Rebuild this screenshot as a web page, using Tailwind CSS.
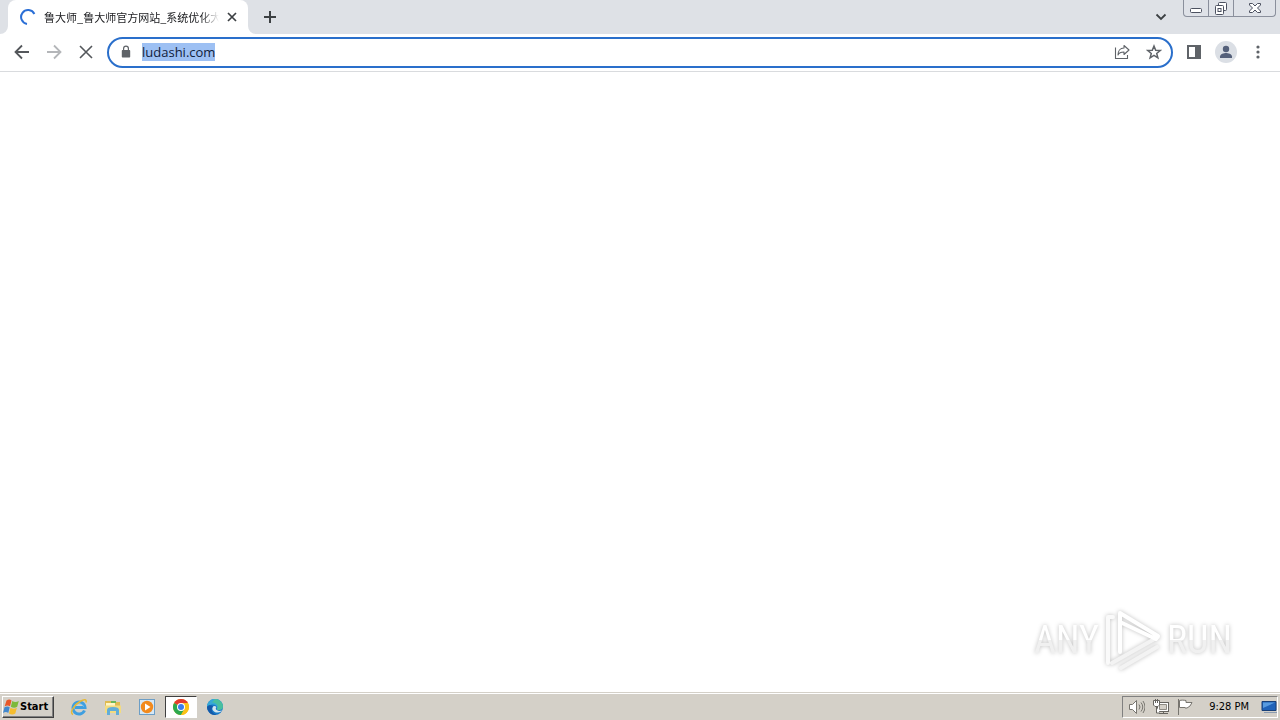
<!DOCTYPE html>
<html lang="zh-CN">
<head>
  <meta charset="UTF-8" />
  <meta name="viewport" content="width=device-width, initial-scale=1.0"/>
  <title>鲁大师_鲁大师官方网站_系统优化大师</title>
  <script src="https://cdn.jsdelivr.net/npm/@tailwindcss/browser@4"></script>
</head>
<body class="h-screen flex flex-col overflow-hidden bg-white font-['DejaVu_Sans_Condensed','Noto_Sans_CJK_SC',sans-serif] text-black">
  <!-- Tab strip -->
  <header class="h-[34px] shrink-0 flex items-start bg-[#dee1e6] pl-2">
    <div class="relative w-60 h-[34px] flex items-center rounded-t-lg bg-white pl-3 pr-2">
      <svg class="absolute -left-2 bottom-0 w-2 h-2" viewBox="0 0 8 8" fill="#fff"><path d="M8 0v8H0a8 8 0 0 0 8-8z"/></svg>
      <svg class="absolute -right-2 bottom-0 w-2 h-2" viewBox="0 0 8 8" fill="#fff"><path d="M0 0v8h8a8 8 0 0 1-8-8z"/></svg>
      <svg class="w-4 h-4 shrink-0" viewBox="0 0 16 16" fill="none" stroke="#2b6fd6" stroke-width="2"><path d="M7 15A7 7 0 1 1 14.400 5"/></svg>
      <span class="ml-2 w-[175px] overflow-hidden whitespace-nowrap font-['Noto_Sans_CJK_SC',sans-serif] text-[11px] leading-4 text-[#202124] mask-r-from-90% mask-r-to-100%">鲁大师_鲁大师官方网站_系统优化大</span>
      <button class="ml-auto w-4 h-4 shrink-0 flex items-center justify-center" aria-label="Close tab">
        <svg class="w-4 h-4" viewBox="0 0 16 16" stroke="#3c4043" stroke-width="1.700"><path d="M4 4l8 8M12 4l-8 8"/></svg>
      </button>
    </div>
    <button class="ml-3 mt-[7px] w-5 h-5" aria-label="New tab">
      <svg viewBox="0 0 20 20" stroke="#3c4043" stroke-width="2"><path d="M10 4v12M4 10h12"/></svg>
    </button>
    <button class="ml-auto mt-2 w-4 h-4" aria-label="Search tabs">
      <svg viewBox="0 0 16 16" fill="none" stroke="#3c4043" stroke-width="1.800"><path d="M3.500 6.500L8 11l4.500-4.500"/></svg>
    </button>
    <div class="ml-[14px] mr-1 h-[17px] flex rounded-b border border-t-0 border-[#8a8f9c] bg-[#dfe2e8] text-[#4c5160]">
      <button class="w-6 flex justify-center" aria-label="Minimize">
        <svg class="w-4 h-4" viewBox="0 0 16 16" fill="#fff" stroke="currentColor"><rect x="2.500" y="8.500" width="11" height="4" rx="1"/></svg>
      </button>
      <button class="w-[26px] flex justify-center border-x border-[#8a8f9c]" aria-label="Restore">
        <svg class="w-4 h-4" viewBox="0 0 16 16" fill="#fff" stroke="currentColor"><rect x="5.500" y="2.500" width="8" height="8" rx="1"/><rect x="2.500" y="5.500" width="8" height="9" rx="1"/><rect x="5" y="8.500" width="3" height="3"/></svg>
      </button>
      <button class="w-[41px] flex justify-center" aria-label="Close">
        <svg class="w-4 h-4" viewBox="0 0 16 16" fill="#fff" stroke="currentColor" stroke-linejoin="round"><path d="M2.500 3.500h3l2.500 2.500 2.500-2.500h3v1.500L10.500 8l3 3v1.500h-3L8 10l-2.500 2.500h-3V11l3-3-3-3z"/></svg>
      </button>
    </div>
  </header>

  <!-- Toolbar -->
  <nav class="h-[38px] shrink-0 flex items-center border-b border-[#d9dbde] bg-white px-3 pb-px">
    <div class="flex gap-3 text-[#54575b]">
      <button class="w-5 h-5" aria-label="Back">
        <svg viewBox="0 0 20 20" fill="none" stroke="currentColor" stroke-width="1.800"><path d="M17 10H4M10 3.500L3.500 10l6.500 6.500"/></svg>
      </button>
      <button class="w-5 h-5 text-[#b4b6b9]" aria-label="Forward">
        <svg viewBox="0 0 20 20" fill="none" stroke="currentColor" stroke-width="1.800"><path d="M3 10h13M10 3.500l6.500 6.500-6.500 6.500"/></svg>
      </button>
      <button class="w-5 h-5" aria-label="Stop">
        <svg viewBox="0 0 20 20" fill="none" stroke="currentColor" stroke-width="1.600"><path d="M4 4l12 12M16 4L4 16"/></svg>
      </button>
    </div>
    <div class="ml-[11px] h-[31px] flex-1 flex items-center rounded-full border-2 border-[#2a6fcb] pl-[9px] pr-[9px]">
      <svg class="w-4 h-4 shrink-0" viewBox="0 0 16 16" fill="#5f6368"><path fill-rule="evenodd" d="M5 6V4.500a3 3 0 0 1 6 0V6h.2c.6 0 1 .4 1 1v5.500c0 .6-.4 1-1 1H4.800c-.6 0-1-.4-1-1V7c0-.6.4-1 1-1zM6.200 6h3.600V4.500a1.800 1.800 0 0 0-3.600 0z"/></svg>
      <input id="omnibox" type="text" value="ludashi.com" aria-label="Address" spellcheck="false" class="ml-2 min-w-0 flex-1 h-[22px] outline-none font-['Open_Sans',sans-serif] text-[13px] text-[#1b2a4a] caret-black selection:bg-[#9dc0f3] selection:text-[#10203c]"/>
      <div class="flex gap-4 text-[#5f6368]">
        <button class="w-4 h-4" aria-label="Share">
          <svg viewBox="0 0 16 16" fill="none" stroke="currentColor" stroke-width="1.100"><path d="M1.500 3.500v11h12V11"/><path d="M10 1.500l5 4.500-5 4.500V8c-3 0-5 .5-6 3 0-4 2-7 6-7z" stroke-linejoin="round"/></svg>
        </button>
        <button class="w-4 h-4" aria-label="Bookmark">
          <svg viewBox="0 0 16 16" fill="none" stroke="currentColor" stroke-width="1.500"><path d="M8 2l1.700 4.200 4.500.3-3.500 2.900 1.200 4.400L8 11.400l-3.900 2.400 1.200-4.400-3.500-2.900 4.500-.3z"/></svg>
        </button>
      </div>
    </div>
    <button class="ml-[13px] w-4 h-4" aria-label="Side panel">
      <svg viewBox="0 0 16 16" fill="#5f6368"><path fill-rule="evenodd" d="M1 1h14v14H1zM3 3v10h6V3z"/></svg>
    </button>
    <button class="ml-[13px] w-[22px] h-[22px] overflow-hidden rounded-full bg-[#dbdfe5]" aria-label="Profile">
      <svg viewBox="0 0 22 22" fill="#54607a"><circle cx="11" cy="8" r="3.200"/><path d="M5 17v-1.500c0-2.500 4-3.500 6-3.500s6 1 6 3.500V17z"/></svg>
    </button>
    <button class="ml-[11px] w-5 h-5" aria-label="Menu">
      <svg viewBox="0 0 20 20" fill="#5f6368"><circle cx="10" cy="5" r="1.600"/><circle cx="10" cy="10" r="1.600"/><circle cx="10" cy="15" r="1.600"/></svg>
    </button>
  </nav>

  <!-- Page, still empty while loading -->
  <main class="flex-1 flex items-end justify-end pr-12 pb-5">
    <div class="flex items-center gap-[5px] font-['Roboto_Condensed','Roboto',sans-serif] text-[38px] leading-[60px] text-white drop-shadow-[0_0_2px_#00000040]">
      <span class="bg-linear-to-b from-white from-50% to-[#f0f0f0] to-50% bg-clip-text text-transparent">ANY</span>
      <svg class="w-[58px] h-16" viewBox="0 0 58 64" fill="none" stroke-linejoin="round" stroke-linecap="round">
        <path d="M17 60l36-21M8 55l46-26" stroke="#f3f3f3" stroke-width="4"/>
        <path d="M9 9H4v46" stroke="#fafafa" stroke-width="4"/>
        <path d="M16 44V5l38 23-2 3-36-17" stroke="#fff" stroke-width="4"/>
      </svg>
      <span class="bg-linear-to-b from-white from-50% to-[#f0f0f0] to-50% bg-clip-text text-transparent">RUN</span>
    </div>
  </main>

  <!-- Taskbar -->
  <footer class="h-7 shrink-0 flex items-center border-t border-[#d4d0c8] bg-[#d4d0c8] px-[2px] shadow-[inset_0_1px_0_#fff] text-[11px]">
    <button class="w-[52px] h-[22px] flex items-center gap-px border border-t-white border-l-white border-r-[#404040] border-b-[#404040] font-bold shadow-[inset_-1px_-1px_0_#808080]">
      <svg class="w-4 h-4 shrink-0" viewBox="0 0 16 16">
        <path d="M3.500 1.500c2-1.200 3.500-1.200 5 0L7 7.300c-1.500-1-3.500-1-5.300 0z" fill="#e8582a"/>
        <path d="M9.300 2c2 1.200 4.200 1.200 6.500 0l-1.600 5.800c-2 1.200-4.300 1.200-6.400 0z" fill="#7db93c"/>
        <path d="M1.500 8.300c2-1 3.700-1 5.200 0L5.300 14c-1.500-1.200-3.300-1.200-5.300 0z" fill="#4288ce"/>
        <path d="M7.500 8.800c2 1.200 4.200 1.200 6.400 0l-1.600 5.700c-2 1.200-4.300 1.200-6.300 0z" fill="#f5bd2f"/>
      </svg>
      <span class="pt-px">Start</span>
    </button>
    <div class="ml-[9px] flex items-center gap-[2px]">
      <button class="w-8 h-[22px] flex items-center justify-center" aria-label="Internet Explorer">
        <svg class="w-[18px] h-[18px]" viewBox="0 0 18 18" fill="none"><path d="M14.500 12.500A6 6 0 1 1 15 9.500H5" stroke="#3f9fe0" stroke-width="3"/><path d="M4 8.500c.5-3 8-4 9.500 0" stroke="#8bcdf4"/><path d="M3 16.500C-1 15 4 7 10 3.500c4-2.500 7-2.500 6 1" stroke="#e6b936" stroke-width="1.500"/></svg>
      </button>
      <button class="w-8 h-[22px] flex items-center justify-center" aria-label="Explorer">
        <svg class="w-[18px] h-[18px]" viewBox="0 0 18 18"><path d="M1 3h6l1 1h8v11H1z" fill="#dfba50"/><path d="M2 5h9v3H2z" fill="#fff6c4"/><path d="M7 3h5v2H7z" fill="#68b75b"/><path d="M1 7.500h16V15H1z" fill="#f3db80"/><path d="M3 17v-5c0-2 2-3 6-3s6 1 6 3v5h-3v-4H6v4z" fill="#62add8"/></svg>
      </button>
      <button class="w-8 h-[22px] flex items-center justify-center" aria-label="Media Player">
        <svg class="w-[18px] h-[18px]" viewBox="0 0 18 18"><rect x="1.500" y="1.500" width="15" height="15" fill="#d6e8f6" stroke="#6c9ec6"/><circle cx="9" cy="9" r="6.200" fill="#f28a1d"/><path d="M7 5.500l5.500 3.500L7 12.500z" fill="#fff"/></svg>
      </button>
      <button class="w-8 h-[22px] flex items-center justify-center border border-t-[#404040] border-l-[#404040] border-r-white border-b-white bg-white" aria-label="Chrome">
        <svg class="w-4 h-4" viewBox="0 0 16 16"><circle cx="8" cy="8" r="8" fill="#fbc116"/><path d="M8 8L1.070 4A8 8 0 0 1 14.930 4z" fill="#e33b2e"/><path d="M8 8L1.070 4A8 8 0 0 0 8 16l3.500-6z" fill="#2da94f"/><path d="M8 4h6.930A8 8 0 0 1 8 16l3.500-6z" fill="#fbc116"/><circle cx="8" cy="8" r="4" fill="#fff"/><circle cx="8" cy="8" r="3" fill="#3b7ded"/></svg>
      </button>
      <button class="w-8 h-[22px] flex items-center justify-center" aria-label="Edge">
        <svg class="w-4 h-4" viewBox="0 0 16 16"><circle cx="8" cy="8" r="8" fill="#1678c8"/><path d="M0 8a8 8 0 0 1 16-.5c0 2.500-2 3.500-4 3.500-1.500 0-2.500-.5-2-1.500C11 7 8 5 5 5.500 2.500 6 .5 7 0 8z" fill="#36a9d6"/><path d="M8 0a8 8 0 0 1 8 7.500c0 2.500-2 3.500-4 3.500-1.500 0-2.500-.5-2-1.500 2-3-1-6-5-6z" fill="#56cf78" opacity=".6"/><path d="M6 7.500c-2 3 1 6.500 5 6 1.500 0 3-.8 4-2-2 .8-4 .5-5.200-.4C8.500 10.500 8.500 9 9.500 8c-1-1-2.500-1.500-3.500-.5z" fill="#d4e6ee"/><path d="M6 7.500c-3 3-.5 7.500 3.500 8.300C4 17 0 12 0 8c1-2 4-2.500 6-.5z" fill="#1459a8"/></svg>
      </button>
    </div>
    <div class="ml-auto h-[22px] flex items-center border border-t-[#808080] border-l-[#808080] border-r-white border-b-white pl-[6px]">
      <div class="flex gap-2">
        <svg class="w-4 h-4" viewBox="0 0 16 16" fill="#fff" stroke="#77756f"><path d="M.5 5.500h3l4-4v13l-4-4h-3z"/><path d="M10 5.500q2 2.500 0 5M12 3.500q3.500 4.500 0 9M14 2q4 6 0 12" fill="none"/></svg>
        <svg class="w-4 h-4" viewBox="0 0 16 16" fill="#fff" stroke="#66645f"><rect x="4.500" y="3.500" width="11" height="9"/><path d="M6.500 5.500h7v5h-7z" fill="#d4d0c8" stroke="#8f8c85"/><path d="M6 14.500h9M10.500 13v1.500M3.500 8v6H7"/><path d="M.5 1.500h6V6L5 7.500H2L.5 6zM2.500 0v4M4.500 0v4"/></svg>
        <svg class="w-4 h-4" viewBox="0 0 16 16" fill="#fff" stroke="#77756f"><path d="M2.500 1.500c2-.5 4-.5 6.500 0v2h6l-2 3.500-3 2H8V8.500H2.500z"/><path d="M1.500 0v16"/></svg>
      </div>
      <time class="ml-4 pt-px whitespace-nowrap">9:28 PM</time>
      <button class="ml-3 w-4 h-4" aria-label="Show desktop">
        <svg viewBox="0 0 16 16"><path d="M1 2.500h14v9H1z" fill="#1f62b9" stroke="#173f78"/><path d="M2 3.500h12L2 9z" fill="#589be0"/><path d="M3 13.500h13" stroke="#8c9cb0"/></svg>
      </button>
    </div>
  </footer>
  <script>
    // the url is selected as soon as the bar has focus
    const omnibox = document.getElementById("omnibox");
    omnibox.focus();
    omnibox.select();
  </script>
</body>
</html>
